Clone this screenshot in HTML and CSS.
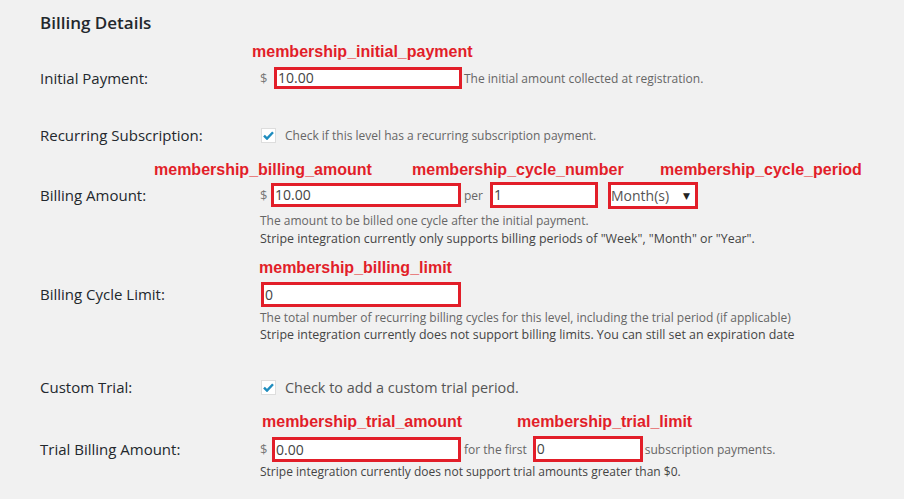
FILE: index.html
```html
<!DOCTYPE html>
<html>
<head>
<meta charset="utf-8">
<link rel="stylesheet" href="styles.css">
</head>
<body>
<div class="page">
  <h2 class="title">Billing Details</h2>

  <div class="row r1">
    <div class="label">Initial Payment:</div>
    <div class="field">
      <span class="note n-initial">membership_initial_payment</span>
      <div class="controls">
        <span class="cur c14">$</span>
        <span class="input w-initial">10.00</span>
        <span class="hint h-after">The initial amount collected at registration.</span>
      </div>
    </div>
  </div>

  <div class="row r2">
    <div class="label">Recurring Subscription:</div>
    <div class="field">
      <div class="controls">
        <span class="check"><svg width="11" height="9" viewBox="0 0 11 9"><path d="M1 4.6 L4 7.6 L10 1.2" fill="none" stroke="#1e8cbe" stroke-width="2.4"/></svg></span>
        <span class="hint">Check if this level has a recurring subscription payment.</span>
      </div>
    </div>
  </div>

  <div class="row r3">
    <div class="label">Billing Amount:</div>
    <div class="field">
      <span class="note n-bamount">membership_billing_amount</span>
      <span class="note n-cnumber">membership_cycle_number</span>
      <span class="note n-cperiod">membership_cycle_period</span>
      <div class="controls tall">
        <span class="cur c11">$</span>
        <span class="input w-bamount">10.00</span>
        <span class="hint h-per">per</span>
        <span class="input w-cnumber">1</span>
        <span class="select">Month(s)<span class="arrow">▼</span></span>
      </div>
      <div class="desc">
        <p>The amount to be billed one cycle after the initial payment.</p>
        <p class="dark wide">Stripe integration currently only supports billing periods of "Week", "Month" or "Year".</p>
      </div>
    </div>
  </div>

  <div class="row r4">
    <div class="label">Billing Cycle Limit:</div>
    <div class="field">
      <span class="note n-blimit">membership_billing_limit</span>
      <div class="controls tall">
        <span class="input w-blimit">0</span>
      </div>
      <div class="desc d4">
        <p>The total number of recurring billing cycles for this level, including the trial period (if applicable)</p>
        <p class="dark wide">Stripe integration currently does not support billing limits. You can still set an expiration date</p>
      </div>
    </div>
  </div>

  <div class="row r5">
    <div class="label">Custom Trial:</div>
    <div class="field">
      <div class="controls">
        <span class="check"><svg width="11" height="9" viewBox="0 0 11 9"><path d="M1 4.6 L4 7.6 L10 1.2" fill="none" stroke="#1e8cbe" stroke-width="2.4"/></svg></span>
        <span class="big">Check to add a custom trial period.</span>
      </div>
    </div>
  </div>

  <div class="row r6">
    <div class="label">Trial Billing Amount:</div>
    <div class="field">
      <span class="note n-tamount">membership_trial_amount</span>
      <span class="note n-tlimit">membership_trial_limit</span>
      <div class="controls tall">
        <span class="cur c12">$</span>
        <span class="input w-tamount">0.00</span>
        <span class="hint h-first">for the first</span>
        <span class="input w-tlimit">0</span>
        <span class="hint h-after">subscription payments.</span>
      </div>
      <div class="desc d6">
        <p class="dark">Stripe integration currently does not support trial amounts greater than $0.</p>
      </div>
    </div>
  </div>
</div>
</body>
</html>
```

FILE: styles.css
```css
html, body {
  margin: 0;
  padding: 0;
  background: #f1f1f1;
}
body {
  font-family: "Open Sans", "DejaVu Sans", sans-serif;
  color: #333;
  width: 904px;
  height: 499px;
  overflow: hidden;
}
.page {
  padding-left: 40px;
}
.title {
  margin: 0;
  padding-top: 12px;
  font-size: 17px;
  line-height: 22px;
  font-weight: 600;
  color: #23282d;
}
.row {
  display: grid;
  grid-template-columns: 220px 1fr;
  align-items: start;
}
.label {
  font-size: 15px;
  line-height: 22px;
  color: #23282d;
}
.row.r3 .label, .row.r4 .label, .row.r6 .label { line-height: 26px; }
.r1 { margin-top: 33px; }
.r2 { margin-top: 35px; }
.r3 { margin-top: 36px; }
.r4 { margin-top: 33px; }
.r5 { margin-top: 33px; }
.r6 { margin-top: 38px; }

.field {
  position: relative;
}
.controls {
  display: flex;
  align-items: center;
  height: 22px;
}
.controls.tall { height: 26px; }

.cur {
  font-size: 13px;
  color: #777;
  display: inline-block;
}
.c14 { width: 14px; }
.c11 { width: 11px; }
.c12 { width: 12px; }

.input {
  box-sizing: border-box;
  height: 22px;
  border: 3px solid #e21e29;
  background: #fff;
  font-size: 14px;
  line-height: 16px;
  color: #444;
  padding-left: 1px;
  display: inline-block;
}
.w-initial { width: 188px; }
.w-bamount { width: 190px; height: 24px; line-height: 18px; }
.w-cnumber { width: 108px; height: 26px; line-height: 20px; margin-left: 7px; }
.w-blimit { width: 200px; height: 25px; line-height: 19px; margin-left: 1px; }
.w-tamount { width: 189px; height: 25px; line-height: 19px; }
.w-tlimit { width: 110px; height: 26px; line-height: 20px; margin-left: 6px; }

.select {
  box-sizing: border-box;
  width: 90px;
  height: 27px;
  margin-left: 10px;
  border: 3px solid #e21e29;
  background: #fff;
  font-size: 14px;
  line-height: 21px;
  color: #555;
  display: flex;
  justify-content: space-between;
  padding-left: 0;
  padding-right: 5px;
}
.arrow {
  font-size: 9px;
  color: #222;
}

.hint {
  font-size: 12px;
  color: #666;
}
.h-after { margin-left: 2px; }
.h-per { margin-left: 3px; }
.h-first { margin-left: 3px; }

.check {
  box-sizing: border-box;
  width: 15px;
  height: 15px;
  margin-left: 1px;
  margin-right: 9px;
  background: #fff;
  border: 1px solid #ddd;
  display: inline-flex;
  align-items: center;
  justify-content: center;
}
.big {
  font-size: 14.4px;
  color: #555;
}

.desc {
  margin-top: 4px;
}
.desc p {
  margin: 0;
  font-size: 12px;
  line-height: 18px;
  color: #666;
}
.desc p.dark { color: #444; }
.desc p.wide { font-size: 12.4px; }
.d4 { margin-top: 2px; }
.d4 p { line-height: 17px; }
.d6 { margin-top: 1px; }

.note {
  position: absolute;
  font-family: "Liberation Sans", Arial, sans-serif;
  font-weight: bold;
  font-size: 16px;
  line-height: 20px;
  color: #e21e29;
  white-space: nowrap;
}
.n-initial { left: -8px; top: -25px; }
.n-bamount { left: -106px; top: -22px; }
.n-cnumber { left: 152px; top: -22px; }
.n-cperiod { left: 400px; top: -22px; }
.n-blimit { left: -1px; top: -23px; }
.n-tamount { left: 2px; top: -24px; }
.n-tlimit { left: 257px; top: -24px; }
```
